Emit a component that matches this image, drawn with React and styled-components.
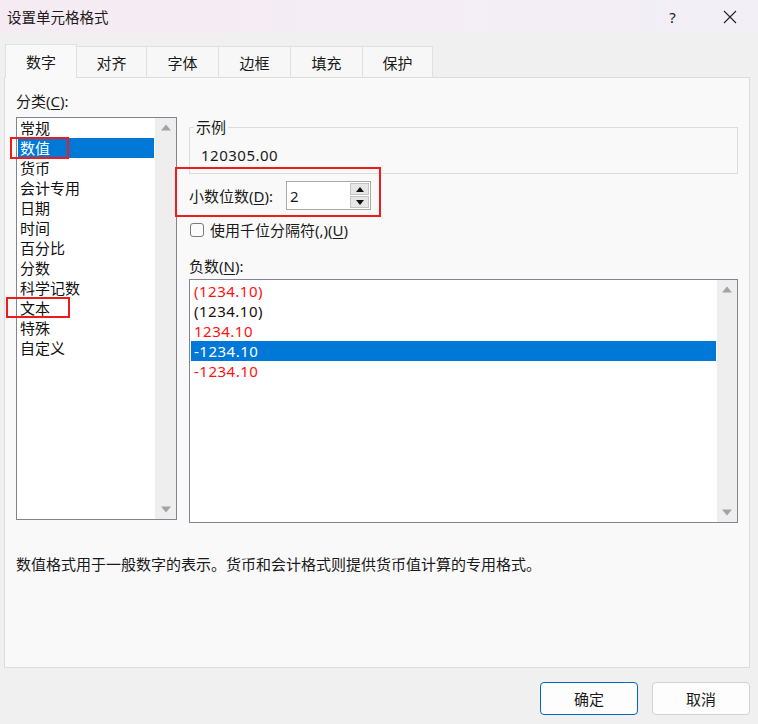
import React from 'react'
import styled, { createGlobalStyle } from 'styled-components'

const GlobalStyle = createGlobalStyle`
  html, body {
    margin: 0;
    padding: 0;
  }
  body {
    background: #f0f0f0;
    font-family: "Noto Sans", "Noto Sans CJK SC", sans-serif;
    font-size: 15px;
    color: #1a1a1a;
  }
`

const Window = styled.div`
  width: 758px;
  height: 724px;
  display: flex;
  flex-direction: column;
  background: #f0f0f0;
  overflow: hidden;
`

const TitleBar = styled.div`
  height: 33px;
  display: flex;
  align-items: center;
  padding-left: 7px;
  background: linear-gradient(90deg, #f6ebf2, #f2eff7);
  font-size: 14.5px;
  color: #1b1b1b;
`

const Title = styled.div`
  flex: 1;
`

const TitleButton = styled.div`
  width: 57px;
  height: 33px;
  display: flex;
  align-items: center;
  justify-content: center;
  font-size: 15px;
`

const Tabs = styled.div`
  display: flex;
  align-items: flex-end;
  margin-top: 11px;
  margin-bottom: -1px;
  padding-left: 5px;
  height: 34px;
  position: relative;
  z-index: 1;
`

const Tab = styled.div`
  width: ${p => p.$w}px;
  height: ${p => (p.$active ? 34 : 32)}px;
  box-sizing: border-box;
  border: 1px solid #e0e0e0;
  border-left: ${p => (p.$first ? '1px solid #e0e0e0' : 'none')};
  border-bottom: ${p => (p.$active ? 'none' : '1px solid #dcdcdc')};
  background: ${p => (p.$active ? '#f9f9f9' : '#f7f7f7')};
  display: flex;
  align-items: center;
  justify-content: center;
`

const Panel = styled.div`
  margin: 0 8px 0 4px;
  height: 591px;
  box-sizing: border-box;
  border: 1px solid #dcdcdc;
  background: #f9f9f9;
  padding: 13px 11px 0 11px;
  display: flex;
  flex-direction: column;
`

const Columns = styled.div`
  display: grid;
  grid-template-columns: 161px 1fr;
  column-gap: 12px;
`

const Column = styled.div`
  display: flex;
  flex-direction: column;
`

const FieldLabel = styled.div`
  line-height: 20px;
  height: ${p => p.$h || 20}px;
  margin-top: ${p => p.$mt || 0}px;
`

const Key = styled.span`
  text-decoration: underline;
  text-underline-offset: 2px;
`

const ListBox = styled.div`
  height: ${p => p.$h}px;
  margin-top: ${p => p.$mt || 0}px;
  box-sizing: border-box;
  border: 1px solid #85848c;
  background: #fff;
  display: flex;
`

const Items = styled.div`
  flex: 1;
  padding: ${p => p.$pt || 0}px 1px 0;
`

const Item = styled.div`
  position: relative;
  height: 20px;
  line-height: 20px;
  padding-left: ${p => p.$pl || 2}px;
  background: ${p => (p.$selected ? '#0078d7' : 'transparent')};
  color: ${p => (p.$selected ? '#fff' : p.$red ? '#ff1010' : '#111')};
`

const Num = styled.span`
  letter-spacing: 0.5px;
`

const ScrollBar = styled.div`
  width: ${p => p.$w}px;
  background: #eeeeee;
  display: flex;
  flex-direction: column;
  justify-content: space-between;
  align-items: center;
  padding: 6px 0;
`

const Mark = styled.div`
  position: absolute;
  left: ${p => p.$l}px;
  top: ${p => p.$t}px;
  width: ${p => p.$w}px;
  height: ${p => p.$h}px;
  box-sizing: border-box;
  border: 2px solid #ef1b1b;
  pointer-events: none;
`

const GroupBox = styled.div`
  position: relative;
  margin-top: 36px;
  height: 47px;
  box-sizing: border-box;
  border: 1px solid #dcdcdc;
  padding: 17px 0 0 11px;
  line-height: 20px;
`

const Legend = styled.span`
  position: absolute;
  left: 4px;
  top: -11px;
  padding: 0 2px;
  background: #f9f9f9;
  line-height: 20px;
`

const DecimalRow = styled.div`
  position: relative;
  margin-top: 7px;
  height: 29px;
  display: flex;
  align-items: center;
`

const DecimalLabel = styled.div`
  width: 97px;
`

const Spin = styled.div`
  width: 85px;
  height: 29px;
  box-sizing: border-box;
  border: 1px solid #a9a9a9;
  background: #fff;
  display: flex;
  align-items: center;
  padding: 1px 1px 1px 3px;
`

const SpinValue = styled.div`
  flex: 1;
`

const SpinButtons = styled.div`
  width: 19px;
  height: 100%;
  display: flex;
  flex-direction: column;
  gap: 1px;
`

const SpinButton = styled.div`
  flex: 1;
  box-sizing: border-box;
  border: 1px solid #c4c4c4;
  background: #e6e6e6;
  display: flex;
  align-items: center;
  justify-content: center;
`

const CheckRow = styled.div`
  margin-top: 12px;
  height: 16px;
  display: flex;
  align-items: center;
  gap: 6px;
  padding-left: 1px;
  line-height: 16px;
`

const CheckBox = styled.div`
  width: 14px;
  height: 14px;
  box-sizing: border-box;
  border: 1px solid #7b7b7b;
  border-radius: 3px;
  background: #fbfbfb;
`

const Description = styled.div`
  margin-top: 31px;
  line-height: 20px;
`

const ButtonRow = styled.div`
  margin-top: 14px;
  display: flex;
  justify-content: flex-end;
  gap: 14px;
  padding-right: 8px;
`

const Button = styled.button`
  width: 98px;
  height: 33px;
  box-sizing: border-box;
  border: 1px solid ${p => (p.$primary ? '#0067c0' : '#d2d2d2')};
  border-radius: 4px;
  background: #fdfdfd;
  font: inherit;
  color: #1a1a1a;
`

const Arrow = ({ down, color = '#a3a3a3' }) => (
  <svg width="10" height="7" viewBox="0 0 10 7">
    <path d={down ? 'M0 0.5 L10 0.5 L5 6.5 Z' : 'M0 6.5 L10 6.5 L5 0.5 Z'} fill={color} />
  </svg>
)

const SmallArrow = ({ down }) => (
  <svg width="8" height="5" viewBox="0 0 8 5">
    <path d={down ? 'M0 0 L8 0 L4 5 Z' : 'M0 5 L8 5 L4 0 Z'} fill="#111" />
  </svg>
)

const tabs = [
  ['数字', 72],
  ['对齐', 70],
  ['字体', 72],
  ['边框', 72],
  ['填充', 72],
  ['保护', 70],
]

const categories = ['常规', '数值', '货币', '会计专用', '日期', '时间', '百分比', '分数', '科学记数', '文本', '特殊', '自定义']

const negatives = [
  { text: '(1234.10)', red: true },
  { text: '(1234.10)' },
  { text: '1234.10', red: true },
  { text: '-1234.10', selected: true },
  { text: '-1234.10', red: true },
]

function App() {
  return (
    <Window>
      <GlobalStyle />
      <TitleBar>
        <Title>设置单元格格式</Title>
        <TitleButton>?</TitleButton>
        <TitleButton>
          <svg width="14" height="14" viewBox="0 0 14 14">
            <path d="M1 1 L13 13 M13 1 L1 13" stroke="#222" strokeWidth="1.1" />
          </svg>
        </TitleButton>
      </TitleBar>

      <Tabs>
        {tabs.map(([name, w], i) => (
          <Tab key={name} $w={w} $first={i === 0} $active={i === 0}>{name}</Tab>
        ))}
      </Tabs>

      <Panel>
        <Columns>
          <Column>
            <FieldLabel $h={26}>分类(<Key>C</Key>):</FieldLabel>
            <ListBox $h={403}>
              <Items>
                {categories.map(c => (
                  <Item key={c} $selected={c === '数值'}>
                    {c}
                    {c === '数值' && <Mark $l={-8} $t={-1} $w={59} $h={22} />}
                    {c === '文本' && <Mark $l={-12} $t={-1} $w={64} $h={21} />}
                  </Item>
                ))}
              </Items>
              <ScrollBar $w={21}>
                <Arrow />
                <Arrow down />
              </ScrollBar>
            </ListBox>
          </Column>

          <Column>
            <GroupBox>
              <Legend>示例</Legend>
              <Num>120305.00</Num>
            </GroupBox>

            <DecimalRow>
              <DecimalLabel>小数位数(<Key>D</Key>):</DecimalLabel>
              <Spin>
                <SpinValue>2</SpinValue>
                <SpinButtons>
                  <SpinButton><SmallArrow /></SpinButton>
                  <SpinButton><SmallArrow down /></SpinButton>
                </SpinButtons>
              </Spin>
              <Mark $l={-14} $t={-14} $w={206} $h={50} />
            </DecimalRow>

            <CheckRow>
              <CheckBox />
              <span>使用千位分隔符(,)(<Key>U</Key>)</span>
            </CheckRow>

            <FieldLabel $mt={18}>负数(<Key>N</Key>):</FieldLabel>
            <ListBox $h={244} $mt={3}>
              <Items $pt={1}>
                {negatives.map((n, i) => (
                  <Item key={i} $pl={3} $red={n.red} $selected={n.selected}>
                    <Num>{n.text}</Num>
                  </Item>
                ))}
              </Items>
              <ScrollBar $w={20}>
                <Arrow />
                <Arrow down />
              </ScrollBar>
            </ListBox>
          </Column>
        </Columns>

        <Description>数值格式用于一般数字的表示。货币和会计格式则提供货币值计算的专用格式。</Description>
      </Panel>

      <ButtonRow>
        <Button $primary>确定</Button>
        <Button>取消</Button>
      </ButtonRow>
    </Window>
  )
}

export default App
